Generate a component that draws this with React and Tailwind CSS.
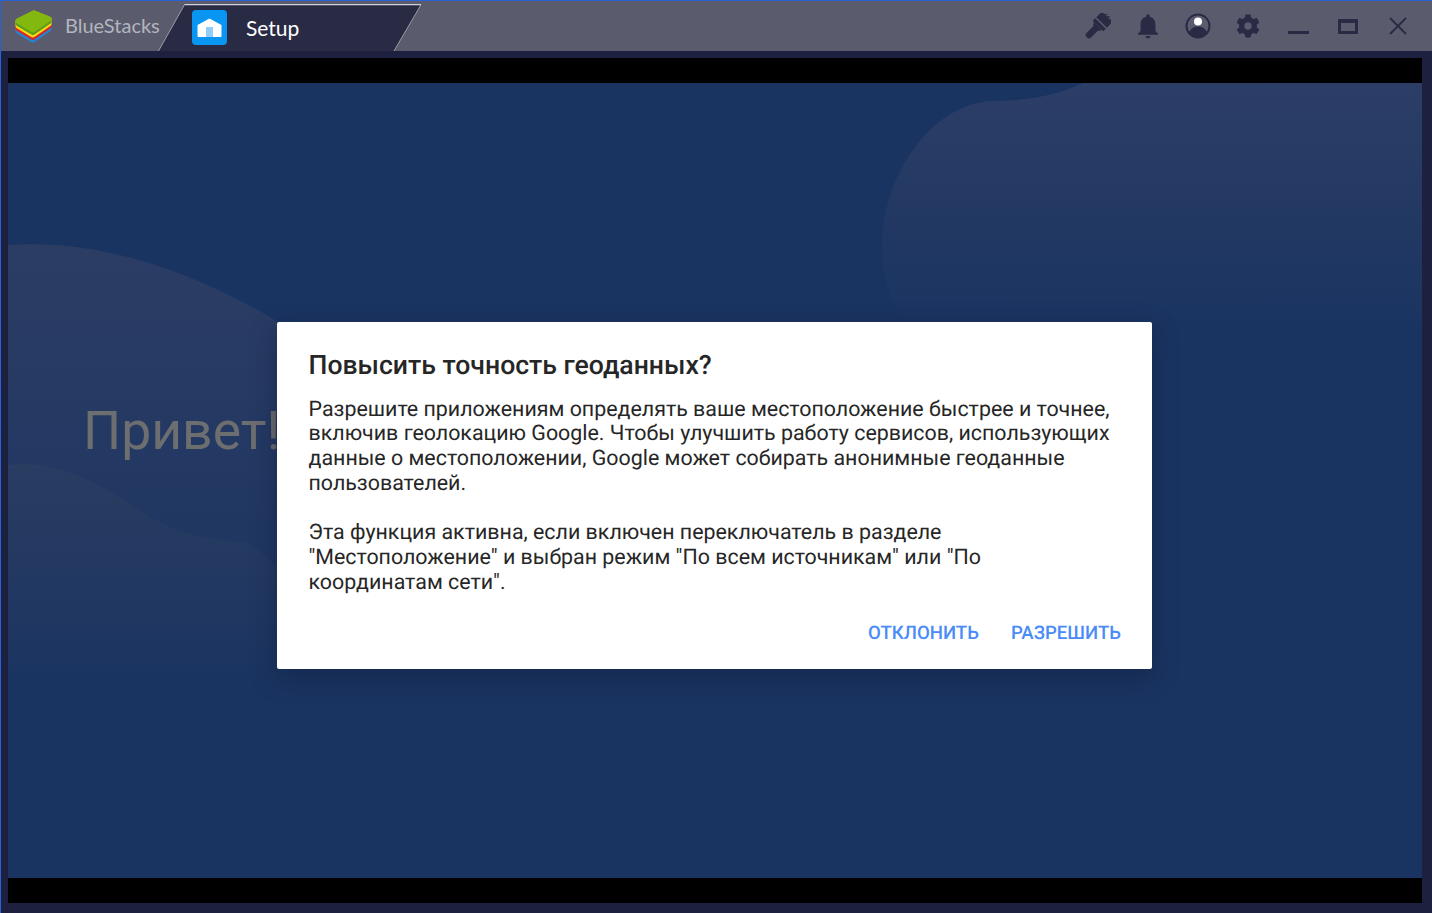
import React from "react";
import { FaCog } from "react-icons/fa";
import { MdNotifications } from "react-icons/md";

const ink = "#292b45";

function Logo() {
  const layer = (h, c) => (
    <polygon
      points={`4,13 20,5 35,11 35,${11 + h} 19,${22 + h} 4,${13 + h}`}
      fill={c}
      stroke={c}
      strokeWidth="5"
      strokeLinejoin="round"
    />
  );
  return (
    <svg width="40" height="36" viewBox="0 0 40 36" className="shrink-0">
      {layer(10, "#1f87d6")}
      {layer(7.500, "#d9242b")}
      {layer(5, "#f6d90f")}
      {layer(2.500, "#5c9e1c")}
      {layer(0, "#83b90f")}
    </svg>
  );
}

function HomeBadge() {
  return (
    <div className="w-[35px] h-[35px] rounded-[4px] bg-[#0996f2] flex items-center justify-center shrink-0">
      <svg width="25" height="19" viewBox="0 0 25 19">
        <path d="M0.5 7 L12.5 0.5 L24.500 7 L24.500 18 Q24.500 19 23.500 19 L1.500 19 Q0.500 19 0.500 18 Z" fill="#ffffff" />
        <rect x="9" y="9" width="7" height="10" fill="#90cdf9" />
      </svg>
    </div>
  );
}

function Tab() {
  return (
    <div className="relative w-[264px] h-[47px] mt-[3px] ml-[-1px] flex items-center pl-[34px] shrink-0">
      <svg width="264" height="47" viewBox="0 0 264 47" className="absolute left-0 top-0">
        <path d="M0.500 47 L26.500 0.700 L263 0.700 L236 47 Z" fill={ink} />
        <path d="M0.500 47 L26.500 0.700 M263 0.700 L236 47" fill="none" stroke="#9a9ca6" strokeWidth="1" />
        <path d="M26.500 0.700 L263 0.700" fill="none" stroke="#d0d2d8" strokeWidth="1.200" />
      </svg>
      <div className="relative flex items-center">
        <HomeBadge />
        <span className="ml-[19px] text-[21px] leading-none text-white font-['Lato','Noto_Sans',sans-serif]">Setup</span>
      </div>
    </div>
  );
}

function Brush() {
  return (
    <svg width="26" height="26" viewBox="0 0 26 26">
      <g transform="translate(1 1) rotate(45 12 12)" fill={ink}>
        <path d="M4.500 7 L4.500 -1 L7.500 -2.500 L7.500 0 L10.500 -3.500 L10.500 -0.500 L14 -3.500 L14 -0.500 L19.500 -3 L19.500 7 Z" />
        <rect x="4.500" y="8.500" width="15" height="3.500" />
        <path d="M6 12 L18 12 L15.200 15.500 L15.200 25 Q15.200 28 12 28 Q8.800 28 8.800 25 L8.800 15.500 Z" />
      </g>
    </svg>
  );
}

function Account() {
  return (
    <svg width="26" height="26" viewBox="0 0 26 26">
      <circle cx="13" cy="13" r="11.500" fill="none" stroke={ink} strokeWidth="2" />
      <path d="M3.500 20 C6 15 9 13.500 13 13.500 C17 13.500 20 15 22.500 20 C20 23 17 24.500 13 24.500 C9 24.500 6 23 3.500 20 Z" fill={ink} />
      <circle cx="13" cy="8.500" r="4" fill="#ffffff" />
    </svg>
  );
}

function Controls() {
  const slot = "w-[50px] h-[26px] flex items-center justify-center";
  return (
    <div className="ml-auto flex items-center pr-[9px] text-[#292b45] h-full">
      <div className={slot}><Brush /></div>
      <div className="w-[49px] h-[26px] flex items-center justify-center"><MdNotifications size={30} /></div>
      <div className="w-[52px] h-[26px] flex items-center justify-center"><Account /></div>
      <div className="w-[48px] h-[26px] flex items-center justify-center"><FaCog size={24} /></div>
      <div className="w-[51px] h-[26px] flex items-center justify-center"><div className="w-[21px] h-[3px] bg-[#292b45] mt-[12px] ml-[1px]" /></div>
      <div className={slot}><div className="w-[20px] h-[15px] border-[3px] border-t-[4px] border-[#292b45]" /></div>
      <div className={slot}>
        <svg width="18" height="18" viewBox="0 0 18 18"><path d="M1 1 L17 17 M17 1 L1 17" stroke="#292b45" strokeWidth="2" fill="none" /></svg>
      </div>
    </div>
  );
}

function Blobs() {
  return (
    <svg className="absolute inset-0 w-full h-full" viewBox="0 0 1414 795" preserveAspectRatio="none">
      <defs>
        <linearGradient id="tr" gradientUnits="userSpaceOnUse" x1="0" y1="0" x2="0" y2="245">
          <stop offset="0" stopColor="#2c3e66" />
          <stop offset="1" stopColor="#1a3461" />
        </linearGradient>
        <linearGradient id="l1" gradientUnits="userSpaceOnUse" x1="0" y1="162" x2="0" y2="600">
          <stop offset="0" stopColor="#2c3d64" />
          <stop offset="1" stopColor="#1a3461" />
        </linearGradient>
        <linearGradient id="l2" gradientUnits="userSpaceOnUse" x1="0" y1="382" x2="0" y2="600">
          <stop offset="0" stopColor="#33425f" stopOpacity="0.4" />
          <stop offset="1" stopColor="#33425f" stopOpacity="0" />
        </linearGradient>
      </defs>
      <path d="M1414 0 L1075 0 C1050 12 1020 18 985 18 C925 20 874 90 874 165 C874 205 890 230 915 270 L1414 270 Z" fill="url(#tr)" />
      <path d="M0 162 C100 155 200 195 280 245 L280 620 L0 620 Z" fill="url(#l1)" />
      <path d="M0 382 C50 376 92 400 142 434 C170 450 195 456 242 460 C255 470 265 480 280 495 L280 620 L0 620 Z" fill="url(#l2)" />
    </svg>
  );
}

function Dialog() {
  return (
    <div className="relative w-[875px] h-[347px] bg-white rounded-[2px] shadow-[0_8px_26px_rgba(15,25,50,0.42)] pt-[28px] pl-[31.500px] pr-[31px] font-['Roboto',sans-serif] text-[#262626] [text-rendering:geometricPrecision]">
      <h1 className="text-[26.600px] leading-[32px] font-medium">Повысить точность геоданных?</h1>
      <p className="mt-[15.500px] text-[21.400px] leading-[24.700px]">
        Разрешите приложениям определять ваше местоположение быстрее и точнее,<br />
        включив геолокацию Google. Чтобы улучшить работу сервисов, использующих<br />
        данные о местоположении, Google может собирать анонимные геоданные<br />
        пользователей.
      </p>
      <p className="mt-[25px] text-[21.400px] leading-[24.700px]">
        Эта функция активна, если включен переключатель в разделе<br />
        "Местоположение" и выбран режим "По всем источникам" или "По<br />
        координатам сети".
      </p>
      <div className="mt-[26px] flex justify-end gap-[32px] text-[18.600px] leading-[24px] font-medium text-[#4a8cf7]">
        <span>ОТКЛОНИТЬ</span>
        <span>РАЗРЕШИТЬ</span>
      </div>
    </div>
  );
}

export default function App() {
  return (
    <div className="w-[1432px] h-[913px] flex flex-col overflow-hidden bg-[#1e2040] border-l border-t border-[#2a62d4]">
      <header className="h-[50px] shrink-0 bg-[#5a5c6e] flex items-stretch">
        <div className="flex items-center pl-[13px] w-[158px] shrink-0">
          <Logo />
          <span className="ml-[11px] mt-[-2px] text-[20px] leading-none text-[#b3b5bd] font-['Lato','Noto_Sans',sans-serif]">BlueStacks</span>
        </div>
        <Tab />
        <Controls />
      </header>
      <div className="flex-1 flex flex-col pt-[7px] pb-[10px] pl-[7px] pr-[10px]">
        <div className="h-[25px] bg-black shrink-0" />
        <main className="relative flex-1 bg-[#1a3461] overflow-hidden flex items-center justify-center">
          <Blobs />
          <div className="absolute left-[75px] top-[314px] text-[53.500px] leading-[68px] text-[#6c6e70] font-['Roboto',sans-serif]">Привет!</div>
          <div className="relative ml-[-1px] mt-[30px]"><Dialog /></div>
        </main>
        <div className="h-[25px] bg-black shrink-0" />
      </div>
    </div>
  );
}
